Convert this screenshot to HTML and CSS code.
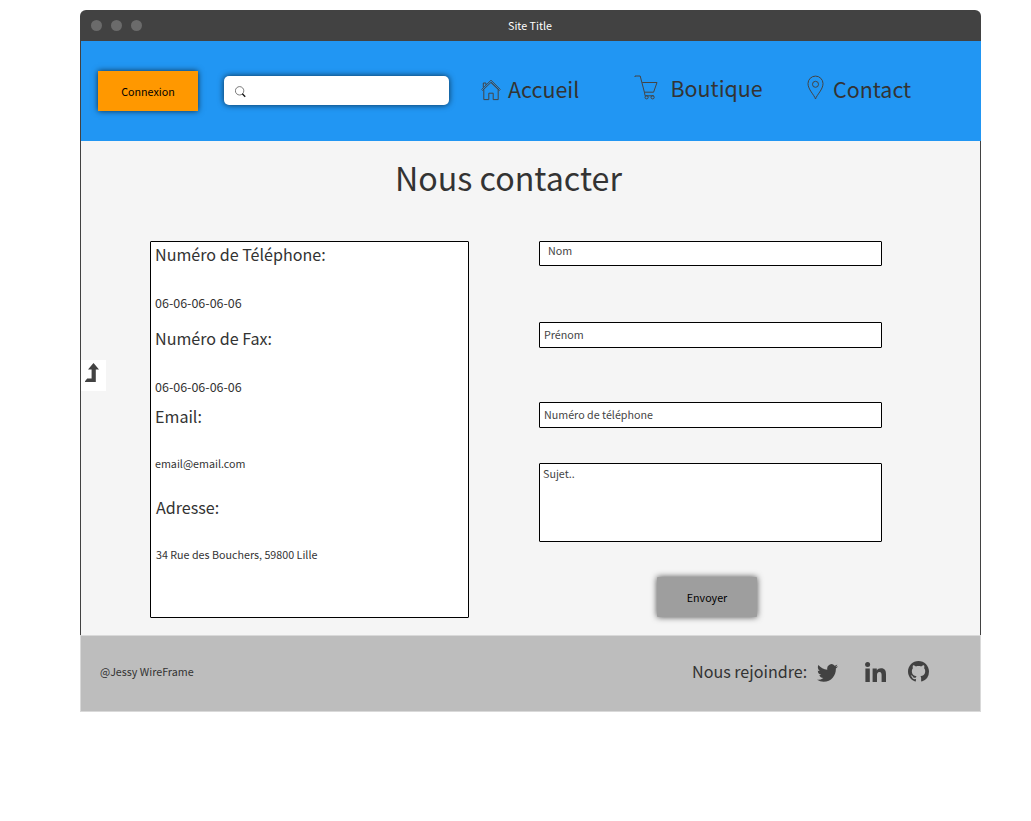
FILE: index.html
```html
<!DOCTYPE html>
<html lang="fr">
<head>
<meta charset="utf-8">
<title>Site Title</title>
<link rel="stylesheet" href="styles.css">
</head>
<body>
<div class="window">
  <div class="titlebar">
    <div class="dots"><i></i><i></i><i></i></div>
    <span class="site-title">Site Title</span>
  </div>
  <header class="header">
    <button class="btn btn-login">Connexion</button>
    <div class="search">
      <svg width="12" height="12" viewBox="0 0 12 12"><circle cx="4.6" cy="4.8" r="4.2" fill="none" stroke="#444" stroke-width=".7"/><path d="M7.3 7.700l2.900 3" stroke="#111" stroke-width="1.300"/></svg>
    </div>
    <nav class="nav">
      <a class="link home">
        <svg width="20" height="22" viewBox="0 0 20 22"><path d="M.6 10.600L10 1.200l9.400 9.400M2.800 10.400v10.200h5v-6.400h4.400v6.400h5V10.400L10 3.400 1.400 11.600M2.300 8.400V4h2.600v1.800M18.600 11.600L10 3.400"/></svg>
        <span>Accueil</span>
      </a>
      <a class="link shop">
        <svg width="24" height="25" viewBox="0 0 24 25"><path d="M1 2V1h5.200l4.200 16.200h9.200L23 7.500H8.200M10.400 17.200l.7 3.600h8.600"/><circle cx="12.600" cy="22.300" r="1.600"/><circle cx="18.600" cy="22.300" r="1.600"/></svg>
        <span>Boutique</span>
      </a>
      <a class="link contact-link">
        <svg width="17" height="25" viewBox="0 0 17 25"><path d="M8.500 24C7.200 19.800 1 14.500 1 8.600a7.500 7.500 0 0 1 15 0C16 14.500 9.800 19.800 8.500 24z"/><circle cx="8.500" cy="9.300" r="3"/></svg>
        <span>Contact</span>
      </a>
    </nav>
  </header>
  <main class="main">
    <h1>Nous contacter</h1>
    <aside class="side-tab">
      <svg width="16" height="20" viewBox="0 0 16 20"><path d="M9.500 0L15 6.600h-3.200V19H1v-.8l2.200-2.600h4.400v-9H4z" fill="#424242"/></svg>
    </aside>
    <div class="columns">
      <section class="info">
        <h2>Numéro de Téléphone:</h2>
        <p class="phone">06-06-06-06-06</p>
        <h2>Numéro de Fax:</h2>
        <p class="phone fax">06-06-06-06-06</p>
        <h2>Email:</h2>
        <p class="email">email@email.com</p>
        <div class="address">
          <h2>Adresse:</h2>
          <p>34 Rue des Bouchers, 59800 Lille</p>
        </div>
      </section>
      <form class="form">
        <input class="field name" placeholder="Nom">
        <input class="field first" placeholder="Prénom">
        <input class="field tel" placeholder="Numéro de téléphone">
        <textarea class="field subject" placeholder="Sujet.."></textarea>
        <button type="button" class="btn btn-send">Envoyer</button>
      </form>
    </div>
  </main>
  <footer class="footer">
    <span class="credit">@Jessy WireFrame</span>
    <span class="join">Nous rejoindre:</span>
    <div class="social">
      <svg class="twitter" width="21" height="18" viewBox="0 2 24 20" preserveAspectRatio="none"><path d="M23.953 4.57a10 10 0 01-2.825.775 4.958 4.958 0 002.163-2.723c-.951.555-2.005.959-3.127 1.184a4.92 4.92 0 00-8.384 4.482C7.69 8.095 4.067 6.13 1.64 3.162a4.822 4.822 0 00-.666 2.475c0 1.71.87 3.213 2.188 4.096a4.904 4.904 0 01-2.228-.616v.06a4.923 4.923 0 003.946 4.827 4.996 4.996 0 01-2.212.085 4.936 4.936 0 004.604 3.417 9.867 9.867 0 01-6.102 2.105c-.39 0-.779-.023-1.17-.067a13.995 13.995 0 007.557 2.209c9.053 0 13.998-7.496 13.998-13.985 0-.21 0-.42-.015-.63A9.935 9.935 0 0024 4.59z"/></svg>
      <svg class="linkedin" width="21" height="20" viewBox="0 0 21 20"><circle cx="2.600" cy="2.600" r="2.500"/><path d="M.4 6.600h4.400V20H.4zM7.600 6.600h4.200v1.900c.8-1.400 2.300-2.200 4.200-2.200 4 0 5 2.500 5 6V20h-4.400v-6.800c0-1.800-.3-3.200-2.200-3.200-1.800 0-2.400 1.300-2.400 3.200V20H7.600z"/></svg>
      <svg class="github" width="21" height="21" viewBox="0 0 16 16"><path d="M8 0C3.580 0 0 3.580 0 8c0 3.540 2.290 6.530 5.470 7.590.4.070.55-.17.55-.38 0-.19-.01-.82-.01-1.490-2.010.370-2.530-.49-2.690-.94-.09-.23-.48-.94-.82-1.130-.28-.15-.68-.52-.01-.53.630-.01 1.080.580 1.230.820.720 1.210 1.870.870 2.330.660.070-.52.280-.87.510-1.070-1.780-.2-3.640-.89-3.640-3.950 0-.87.310-1.590.820-2.150-.08-.2-.36-1.020.080-2.120 0 0 .670-.21 2.200.820.640-.18 1.320-.27 2-.27s1.360.09 2 .27c1.530-1.040 2.200-.82 2.200-.82.440 1.100.160 1.920.080 2.120.510.560.820 1.270.820 2.150 0 3.070-1.870 3.750-3.650 3.950.290.250.540.730.540 1.480 0 1.070-.01 1.930-.01 2.200 0 .210.150.460.550.380A8.010 8.010 0 0 0 16 8c0-4.420-3.580-8-8-8z"/></svg>
    </div>
  </footer>
</div>
</body>
</html>
```
FILE: styles.css
```css
* { box-sizing: border-box; }
body {
  margin: 0;
  background: #fff;
  color: #333;
  font: 10.72px/20px "Noto Sans CJK SC", "Noto Sans CJK JP", sans-serif;
}
h1, h2, p { margin: 0; font-weight: 400; }
svg { display: block; flex: none; }

.window { width: 901px; margin: 10px 0 0 80px; }

.titlebar {
  display: grid;
  grid-template-columns: 1fr auto 1fr;
  align-items: center;
  height: 31px;
  padding: 0 12px 1px 11px;
  border-radius: 6px 6px 0 0;
  background: #424242;
  color: #fff;
}
.dots { display: flex; gap: 9px; }
.dots i { width: 11px; height: 11px; border-radius: 50%; background: #6b6b6b; }
.site-title { padding-top: 2px; }

.header {
  display: flex;
  align-items: flex-start;
  height: 100px;
  padding-left: 16px;
  border-left: 1px solid #424242;
  background: #2196f3;
}
.btn {
  width: 100px;
  height: 40px;
  padding: 2px 0 0;
  border: 0;
  color: #000;
  font: inherit;
  box-shadow: 0 0 6px rgba(0, 0, 0, .7);
}
.btn-login { margin: 30px 0 0 1px; background: #ff9800; }
.search {
  display: flex;
  align-items: center;
  width: 225px;
  height: 29px;
  margin: 35px 0 0 26px;
  padding: 2px 0 0 11px;
  border-radius: 5px;
  background: #fff;
  box-shadow: 0 0 6px rgba(0, 0, 0, .7);
}
.nav { display: flex; margin-left: 31.500px; font-size: 21.450px; line-height: 32px; }
.link { display: flex; color: #333; }
.link svg { fill: none; stroke: #444; stroke-width: 1; }
.home { width: 153.500px; padding-top: 32px; gap: 7.500px; }
.home svg { margin-top: 6px; }
.shop { width: 173px; padding-top: 31px; gap: 12.500px; }
.shop svg { margin-top: 3px; }
.contact-link { padding-top: 32px; gap: 9px; }
.contact-link svg { margin-top: 2px; }

.main {
  position: relative;
  height: 494px;
  border: solid #424242;
  border-width: 0 1px;
  background: #f5f5f5;
}
h1 {
  height: 100px;
  padding: 11px 0 0 314px;
  font-size: 32.200px;
  line-height: 50px;
}
.side-tab {
  position: absolute;
  left: 0;
  top: 219px;
  width: 25px;
  height: 31px;
  padding: 3px 0 0 3px;
  background: #fff;
}
.columns { display: flex; gap: 70px; padding-left: 69px; }
.info {
  width: 319px;
  height: 377px;
  padding-left: 4px;
  border: 1px solid #000;
  border-radius: 1px;
  background: #fff;
}
h2 { font-size: 16.100px; line-height: 24px; }
.phone { margin: 27px 0 13px; font-size: 12.500px; }
.fax { margin-bottom: 7px; }
.email { margin: 26px 0 21px; }
.address { padding-left: 1px; }
.address p { margin-top: 26px; }

.form { display: flex; flex-direction: column; width: 343px; }
.field {
  height: 26px;
  padding: 0 4px 1px;
  border: 1px solid #000;
  border-radius: 1px;
  outline: 0;
  background: #fff;
  color: #333;
  font: inherit;
  resize: none;
}
.field::placeholder { color: #444; opacity: 1; }
.name { height: 25px; padding: 0 8px 6px; }
.first { margin-top: 56px; }
.tel { margin-top: 54px; }
.subject { height: 79px; margin-top: 35px; padding: 0 3px; line-height: 19px; }
.btn-send { margin: 35px 0 0 118px; border-radius: 1px; background: #9e9e9e; }

.footer {
  display: flex;
  align-items: center;
  height: 77px;
  padding-left: 19px;
  border: 1px solid #d9d9d9;
  background: #bdbdbd;
}
.credit { width: 592px; padding-bottom: 4px; }
.join { width: 125px; padding-bottom: 6px; font-size: 16.100px; }
.social { display: flex; align-items: flex-end; padding-bottom: 5px; fill: #424242; }
.linkedin { margin-left: 27px; }
.github { margin-left: 22px; }
```
